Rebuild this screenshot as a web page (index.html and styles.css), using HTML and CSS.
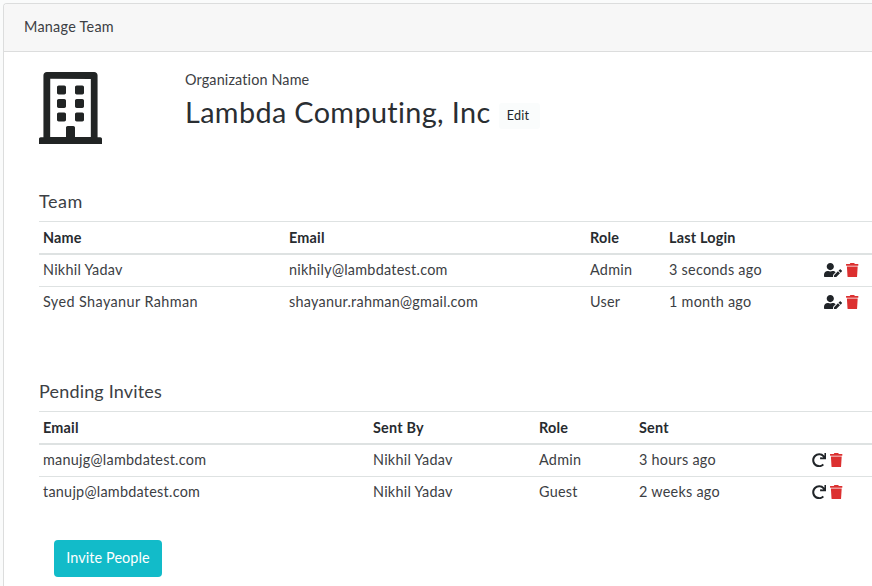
FILE: index.html
```html
<!DOCTYPE html>
<html lang="en">
<head>
<meta charset="utf-8">
<title>Manage Team</title>
<link rel="stylesheet" href="styles.css">
</head>
<body>
<svg class="sprite" aria-hidden="true">
  <symbol id="user-edit" viewBox="0 0 640 512"><path d="M224 256c70.7 0 128-57.3 128-128S294.700 0 224 0 96 57.300 96 128s57.300 128 128 128zm89.600 32h-16.700c-22.200 10.200-46.900 16-72.900 16s-50.600-5.800-72.900-16h-16.700C60.200 288 0 348.200 0 422.400V464c0 26.500 21.500 48 48 48h274.900c-2.400-6.800-3.400-14-2.600-21.300l6.800-60.900 1.200-11.100 7.900-7.900 77.300-77.300c-24.500-27.700-60-45.500-99.900-45.500zm45.300 145.300l-6.800 61c-1.100 10.200 7.500 18.800 17.600 17.600l60.900-6.800 137.900-137.900-71.700-71.700-137.900 137.800zM633 268.900L595.100 231c-9.300-9.300-24.500-9.300-33.800 0l-37.800 37.800-4.100 4.100 71.800 71.700 41.800-41.800c9.300-9.400 9.300-24.500 0-33.900z"/></symbol>
  <symbol id="trash" viewBox="0 0 448 512"><path d="M432 32H312l-9.400-18.700A24 24 0 0 0 281.100 0H166.800a23.720 23.720 0 0 0-21.400 13.300L136 32H16A16 16 0 0 0 0 48v32a16 16 0 0 0 16 16h416a16 16 0 0 0 16-16V48a16 16 0 0 0-16-16zM53.200 467a48 48 0 0 0 47.900 45h245.800a48 48 0 0 0 47.900-45L416 128H32z"/></symbol>
  <symbol id="redo" viewBox="0 0 512 512"><path d="M500.330 0h-47.410a12 12 0 0 0-12 12.570l4 82.760A247.420 247.420 0 0 0 256 8C119.340 8 7.900 119.530 8 256.190 8.100 393.070 119.100 504 256 504a247.100 247.100 0 0 0 166.180-63.910 12 12 0 0 0 .48-17.430l-34-34a12 12 0 0 0-16.380-.55A176 176 0 1 1 402.100 157.800l-101.530-4.870a12 12 0 0 0-12.570 12v47.410a12 12 0 0 0 12 12h200.330a12 12 0 0 0 12-12V12a12 12 0 0 0-12-12z"/></symbol>
</svg>
<main class="card">
  <header class="card-header">Manage Team</header>
  <div class="card-body">
    <section class="org">
      <svg class="building" viewBox="0 0 448 512"><path d="M128 148v-40c0-6.600 5.400-12 12-12h40c6.600 0 12 5.400 12 12v40c0 6.600-5.400 12-12 12h-40c-6.600 0-12-5.400-12-12zm140 12h40c6.600 0 12-5.400 12-12v-40c0-6.600-5.400-12-12-12h-40c-6.600 0-12 5.400-12 12v40c0 6.600 5.400 12 12 12zm-128 96h40c6.600 0 12-5.400 12-12v-40c0-6.600-5.400-12-12-12h-40c-6.600 0-12 5.400-12 12v40c0 6.600 5.400 12 12 12zm128 0h40c6.600 0 12-5.400 12-12v-40c0-6.600-5.400-12-12-12h-40c-6.600 0-12 5.400-12 12v40c0 6.600 5.400 12 12 12zm-76 84v-40c0-6.600-5.400-12-12-12h-40c-6.600 0-12 5.400-12 12v40c0 6.600 5.400 12 12 12h40c6.600 0 12-5.400 12-12zm76 12h40c6.600 0 12-5.400 12-12v-40c0-6.600-5.400-12-12-12h-40c-6.600 0-12 5.400-12 12v40c0 6.600 5.400 12 12 12zm180 124v36H0v-36c0-6.600 5.400-12 12-12h19.500V24c0-13.300 10.700-24 24-24h337c13.300 0 24 10.700 24 24v440H436c6.600 0 12 5.400 12 12zM79.500 463H192v-67c0-6.600 5.400-12 12-12h40c6.600 0 12 5.400 12 12v67h112.500V49L80 48l-.5 415z"/></svg>
      <div>
        <div class="org-label">Organization Name</div>
        <div class="org-row"><h1 class="org-name">Lambda Computing, Inc</h1><button class="edit">Edit</button></div>
      </div>
    </section>

    <section class="block">
      <h2 class="title title-team">Team</h2>
      <table class="table">
        <colgroup><col class="t-name"><col class="t-email"><col class="t-role"><col class="t-login"><col></colgroup>
        <thead><tr><th>Name</th><th>Email</th><th>Role</th><th>Last Login</th><th></th></tr></thead>
        <tbody>
          <tr><td>Nikhil Yadav</td><td>nikhily@lambdatest.com</td><td>Admin</td><td>3 seconds ago</td><td><div class="actions"><svg class="i-user"><use href="#user-edit"/></svg><svg class="i-trash"><use href="#trash"/></svg></div></td></tr>
          <tr><td class="wide">Syed Shayanur Rahman</td><td>shayanur.rahman@gmail.com</td><td>User</td><td>1 month ago</td><td><div class="actions"><svg class="i-user"><use href="#user-edit"/></svg><svg class="i-trash"><use href="#trash"/></svg></div></td></tr>
        </tbody>
      </table>
    </section>

    <section class="block">
      <h2 class="title">Pending Invites</h2>
      <table class="table">
        <colgroup><col class="p-email"><col class="p-by"><col class="p-role"><col class="p-sent"><col></colgroup>
        <thead><tr><th>Email</th><th>Sent By</th><th>Role</th><th>Sent</th><th></th></tr></thead>
        <tbody>
          <tr><td>manujg@lambdatest.com</td><td>Nikhil Yadav</td><td>Admin</td><td>3 hours ago</td><td><div class="actions"><svg class="i-redo"><use href="#redo"/></svg><svg class="i-trash"><use href="#trash"/></svg></div></td></tr>
          <tr><td>tanujp@lambdatest.com</td><td>Nikhil Yadav</td><td>Guest</td><td>2 weeks ago</td><td><div class="actions"><svg class="i-redo"><use href="#redo"/></svg><svg class="i-trash"><use href="#trash"/></svg></div></td></tr>
        </tbody>
      </table>
    </section>
    <button class="invite">Invite People</button>
  </div>
</main>
</body>
</html>
```
FILE: styles.css
```css
* { box-sizing: border-box; }
body {
  margin: 0;
  height: 586px;
  padding: 3px 0 0 3px;
  overflow: hidden;
  background: #fafbfb;
  color: #3c4044;
  font: 400 14.4px/23px Lato, "Open Sans", sans-serif;
  font-variant-ligatures: none;
  letter-spacing: 0.26px;
}
.sprite { display: none; }
svg { display: block; flex: none; fill: #212529; }
button { font-family: inherit; border: 0; padding: 0; }
.card {
  width: 869px;
  height: 583px;
  background: #fff;
  border: 1px solid #dcdddd;
  border-width: 1px 0 0 1px;
  border-radius: 4px 0 0 0;
  overflow: hidden;
}
.card-header {
  height: 48px;
  padding: 11px 20px;
  background: #f7f7f7;
  border-bottom: 1px solid #dcdddd;
}
.card-body { display: flow-root; padding: 20px 0 0 35px; }
.org { display: flex; height: 118px; }
.building { width: 63px; height: 72px; margin: 0 83.500px 0 -0.500px; fill: #212424; }
.org-label { margin-top: -4px; letter-spacing: 0.14px; }
.org-row { display: flex; gap: 9px; }
.org-name {
  width: 305px;
  margin: 4px 0 0;
  color: #2a2e32;
  font-size: 28.8px;
  font-weight: 400;
  line-height: 34px;
  letter-spacing: 0.37px;
  white-space: nowrap;
}
.edit {
  width: 41px;
  height: 26px;
  margin-top: 12px;
  padding-right: 3px;
  border-radius: 3px;
  background: #fafcfc;
  color: #212529;
  font-size: 12.6px;
  line-height: 26px;
  letter-spacing: 0.2px;
}
.block { height: 190px; }
.title {
  height: 23px;
  margin: 0 0 8px;
  font-size: 18px;
  font-weight: 400;
  line-height: 23px;
  letter-spacing: 0.17px;
}
.title-team { letter-spacing: 0.5px; }
.table { width: 860px; table-layout: fixed; border-collapse: separate; border-spacing: 0; }
th, td { padding: 0 4px; text-align: left; white-space: nowrap; }
th {
  height: 34px;
  padding-bottom: 1px;
  border-top: 1px solid #dee2e2;
  border-bottom: 2px solid #dee2e2;
  color: #272b2f;
  font-weight: 700;
  letter-spacing: 0.2px;
}
td { height: 31px; padding-bottom: 2px; }
tr + tr td { height: 32px; border-top: 1px solid #dee2e2; }
.wide { letter-spacing: 0.4px; }
.t-name { width: 246px; }
.t-email { width: 301px; }
.t-role { width: 79px; }
.t-login { width: 155px; }
.p-email { width: 330px; }
.p-by { width: 166px; }
.p-role { width: 100px; }
.p-sent { width: 173px; }
.actions { display: flex; gap: 4px; margin-top: 1px; }
.i-user { width: 18px; height: 14.4px; }
.i-trash { width: 12.6px; height: 14.4px; fill: #dc3030; }
.i-redo { width: 14.4px; height: 14.4px; }
.invite {
  display: block;
  width: 108px;
  height: 37px;
  margin: -30px 0 0 15px;
  padding-bottom: 1px;
  border-radius: 4px;
  background: #12bbc9;
  color: #fff;
  font-size: 14.4px;
  line-height: 36px;
  letter-spacing: 0.1px;
}
```
